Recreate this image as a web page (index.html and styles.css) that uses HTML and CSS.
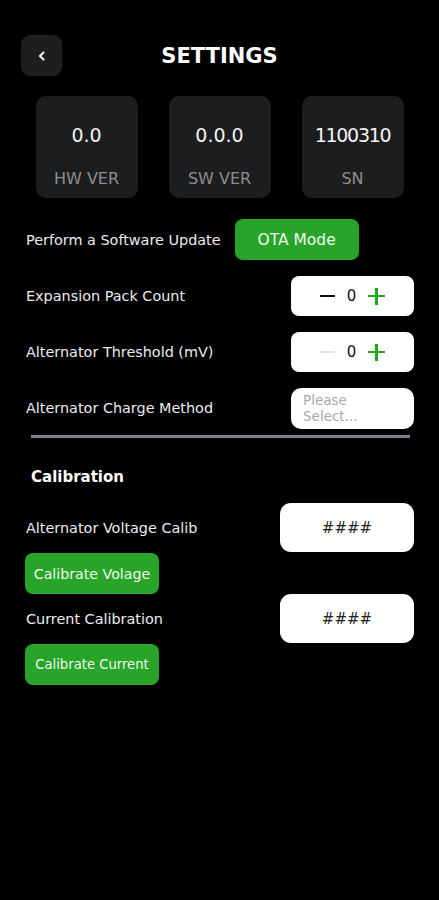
FILE: index.html
```html
<!DOCTYPE html>
<html>
<head>
<meta charset="utf-8">
<link rel="stylesheet" href="styles.css">
</head>
<body>
<div class="page">
  <header class="header">
    <div class="back">
      <svg width="12" height="12" viewBox="0 0 12 12"><path d="M7.5 2.5 L4 6 L7.5 9.5" fill="none" stroke="#fff" stroke-width="2" stroke-linecap="round" stroke-linejoin="round"/></svg>
    </div>
    <h1 class="title">SETTINGS</h1>
    <div></div>
  </header>

  <section class="cards">
    <div class="card"><div class="card-val">0.0</div><div class="card-lbl">HW VER</div></div>
    <div class="card"><div class="card-val">0.0.0</div><div class="card-lbl">SW VER</div></div>
    <div class="card"><div class="card-val sn">1100310</div><div class="card-lbl">SN</div></div>
  </section>

  <div class="row row-ota">
    <span class="label">Perform a Software Update</span>
    <button class="btn-green ota">OTA Mode</button>
  </div>

  <div class="row row-ctl">
    <span class="label">Expansion Pack Count</span>
    <div class="stepper">
      <span class="minus"></span>
      <span class="num">0</span>
      <span class="plus"></span>
    </div>
  </div>

  <div class="row row-ctl">
    <span class="label">Alternator Threshold (mV)</span>
    <div class="stepper">
      <span class="minus faded"></span>
      <span class="num">0</span>
      <span class="plus"></span>
    </div>
  </div>

  <div class="row row-ctl">
    <span class="label">Alternator Charge Method</span>
    <div class="select">Please<br>Select...</div>
  </div>

  <div class="divider"></div>

  <h2 class="section">Calibration</h2>

  <div class="calib">
    <div class="calib-left">
      <span class="label">Alternator Voltage Calib</span>
      <button class="btn-green calib-btn">Calibrate Volage</button>
    </div>
    <div class="calib-input">####</div>
  </div>

  <div class="calib">
    <div class="calib-left">
      <span class="label">Current Calibration</span>
      <button class="btn-green calib-btn small">Calibrate Current</button>
    </div>
    <div class="calib-input">####</div>
  </div>
</div>
</body>
</html>
```

FILE: styles.css
```css
* { box-sizing: border-box; }
html, body {
  margin: 0;
  padding: 0;
  background: #000;
}
body {
  font-family: "DejaVu Sans", "Liberation Sans", sans-serif;
  color: #f0f0f0;
  width: 439px;
  height: 900px;
  overflow: hidden;
}
.page {
  padding-top: 35px;
}
.header {
  display: grid;
  grid-template-columns: 1fr auto 1fr;
  align-items: center;
  padding-left: 21px;
}
.back {
  width: 41px;
  height: 41px;
  border-radius: 9px;
  background: #1c1e20;
  display: flex;
  align-items: center;
  justify-content: center;
}
.title {
  margin: 0;
  font-size: 21px;
  font-weight: bold;
  color: #fff;
  margin-left: -21px;
}
.cards {
  display: flex;
  justify-content: center;
  gap: 31px;
  margin-top: 20px;
}
.card {
  width: 102px;
  height: 102px;
  border-radius: 10px;
  background: #1c1d1f;
  display: flex;
  flex-direction: column;
  align-items: center;
  padding-top: 27px;
}
.card-val {
  font-size: 19px;
  color: #f2f2f2;
  height: 24px;
  line-height: 24px;
}
.card-val.sn { letter-spacing: -1.3px; }
.card-lbl {
  margin-top: 22px;
  font-size: 16px;
  color: #8e8e8e;
}
.row {
  display: flex;
  align-items: center;
  padding-left: 26px;
  padding-right: 25px;
}
.label {
  font-size: 14.4px;
  color: #ececec;
  white-space: nowrap;
}
.row-ota {
  margin-top: 21px;
  height: 41px;
}
.btn-green {
  border: none;
  padding: 0;
  white-space: nowrap;
  background: #28a528;
  color: #eef8ee;
  font-family: inherit;
  border-radius: 8px;
}
.ota {
  margin-left: 14px;
  width: 124px;
  height: 41px;
  font-size: 15.5px;
}
.row-ctl {
  justify-content: space-between;
  height: 40px;
  margin-top: 16px;
}
.stepper {
  width: 123px;
  height: 40px;
  background: #fff;
  border-radius: 8px;
  display: flex;
  align-items: center;
  justify-content: center;
  gap: 12px;
}
.minus {
  width: 15px;
  height: 2px;
  background: #111;
}
.minus.faded { background: #e2e2e2; }
.num {
  font-size: 15px;
  color: #111;
}
.plus {
  position: relative;
  width: 17px;
  height: 17px;
}
.plus::before, .plus::after {
  content: "";
  position: absolute;
  background: #1fa51f;
}
.plus::before { left: 0; top: 7px; width: 17px; height: 2.6px; }
.plus::after { left: 7.2px; top: 0; width: 2.6px; height: 17px; }
.select {
  width: 123px;
  height: 41px;
  background: #fff;
  border-radius: 10px;
  color: #a8a8a8;
  font-size: 13.5px;
  line-height: 16px;
  padding: 4px 12px;
}
.divider {
  margin: 7px 29px 0 31px;
  height: 3px;
  background: #7b828b;
}
.section {
  margin: 29px 0 0 31px;
  font-size: 15px;
  font-weight: bold;
  color: #fff;
  height: 20px;
  line-height: 20px;
}
.calib {
  display: flex;
  justify-content: space-between;
  padding-left: 25px;
  padding-right: 25px;
}
.section + .calib { margin-top: 16px; }
.calib + .calib { margin-top: 0; }
.calib-left {
  display: flex;
  flex-direction: column;
  align-items: flex-start;
}
.calib-left .label {
  height: 50px;
  line-height: 50px;
  padding-left: 1px;
}
.calib-btn {
  width: 134px;
  height: 41px;
  font-size: 14.2px;
}
.calib-btn.small { font-size: 13.2px; }
.calib-input {
  width: 134px;
  height: 49px;
  background: #fff;
  border-radius: 11px;
  color: #222;
  font-size: 15px;
  display: flex;
  align-items: center;
  justify-content: center;
}
```
